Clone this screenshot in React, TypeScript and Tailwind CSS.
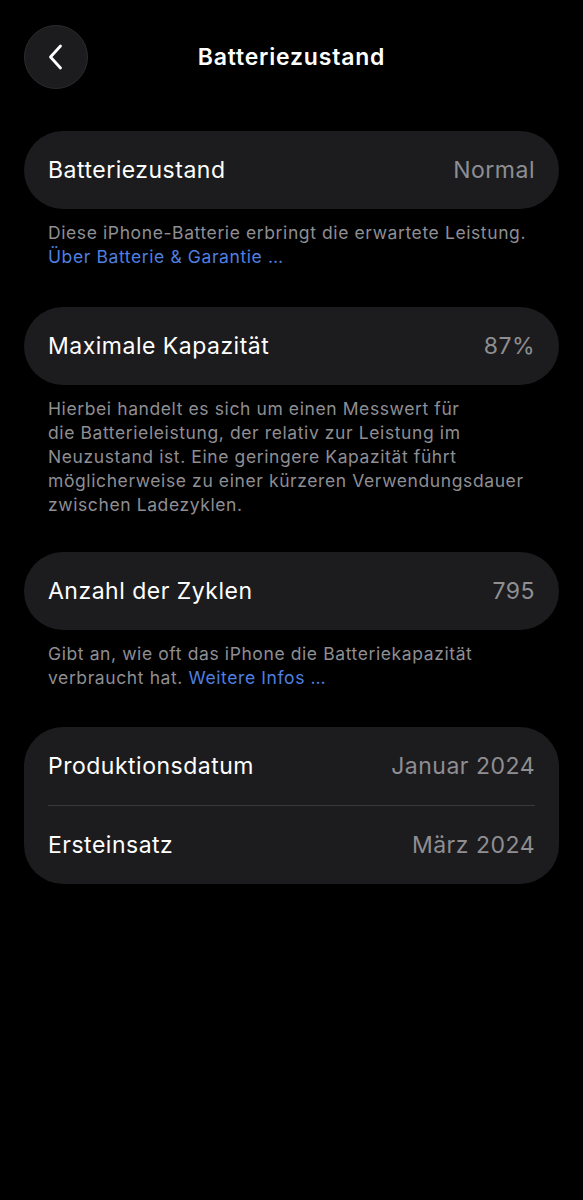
import React from 'react';

function Row({ label, value }: { label: string; value: string }) {
    return (
        <div className="flex h-[78px] items-center justify-between px-6">
            <span className="text-[23px] tracking-[0.5px] text-white">{label}</span>
            <span className="text-[23px] tracking-[0.5px] text-[#8e8e93]">{value}</span>
        </div>
    );
}

export default function App() {
    return (
        <div
            className="min-h-[1200px] w-full bg-black px-6 pt-[25px]"
            style={{ fontFamily: 'Inter, "Noto Sans", sans-serif' }}
        >
            <header className="relative flex h-16 items-center justify-center">
                <button className="absolute left-0 top-0 flex h-16 w-16 items-center justify-center rounded-full border border-[#2c2c2e] bg-[#1c1c1e]">
                    <svg width="22" height="30" viewBox="0 0 22 30" fill="none">
                        <path d="M15.5 4 L5.5 15 L15.5 26" stroke="white" strokeWidth="2.8" strokeLinecap="round" strokeLinejoin="round" />
                    </svg>
                </button>
                <h1 className="text-[23px] font-semibold tracking-[0.8px] text-white">Batteriezustand</h1>
            </header>

            <section className="mt-[42px] rounded-[39px] bg-[#1c1c1e]">
                <Row label="Batteriezustand" value="Normal" />
            </section>
            <p className="mt-[12px] px-6 text-[17.5px] leading-[24px] tracking-[0.6px] text-[#8e8e93]">
                Diese iPhone-Batterie erbringt die erwartete Leistung.
                <br />
                <span className="text-[#4f7fe0]">Über Batterie &amp; Garantie …</span>
            </p>

            <section className="mt-[38px] rounded-[39px] bg-[#1c1c1e]">
                <Row label="Maximale Kapazität" value="87%" />
            </section>
            <p className="mt-[12px] px-6 text-[17.5px] leading-[24px] tracking-[0.6px] text-[#8e8e93]">
                Hierbei handelt es sich um einen Messwert für
                <br />
                die Batterieleistung, der relativ zur Leistung im
                <br />
                Neuzustand ist. Eine geringere Kapazität führt
                <br />
                möglicherweise zu einer kürzeren Verwendungsdauer
                <br />
                zwischen Ladezyklen.
            </p>

            <section className="mt-[35px] rounded-[39px] bg-[#1c1c1e]">
                <Row label="Anzahl der Zyklen" value="795" />
            </section>
            <p className="mt-[12px] px-6 text-[17.5px] leading-[24px] tracking-[0.6px] text-[#8e8e93]">
                Gibt an, wie oft das iPhone die Batteriekapazität
                <br />
                verbraucht hat. <span className="text-[#4f7fe0]">Weitere Infos …</span>
            </p>

            <section className="mt-[37px] rounded-[39px] bg-[#1c1c1e]">
                <Row label="Produktionsdatum" value="Januar 2024" />
                <div className="mx-6 h-px bg-[#38383a]" />
                <Row label="Ersteinsatz" value="März 2024" />
            </section>
        </div>
    );
}
